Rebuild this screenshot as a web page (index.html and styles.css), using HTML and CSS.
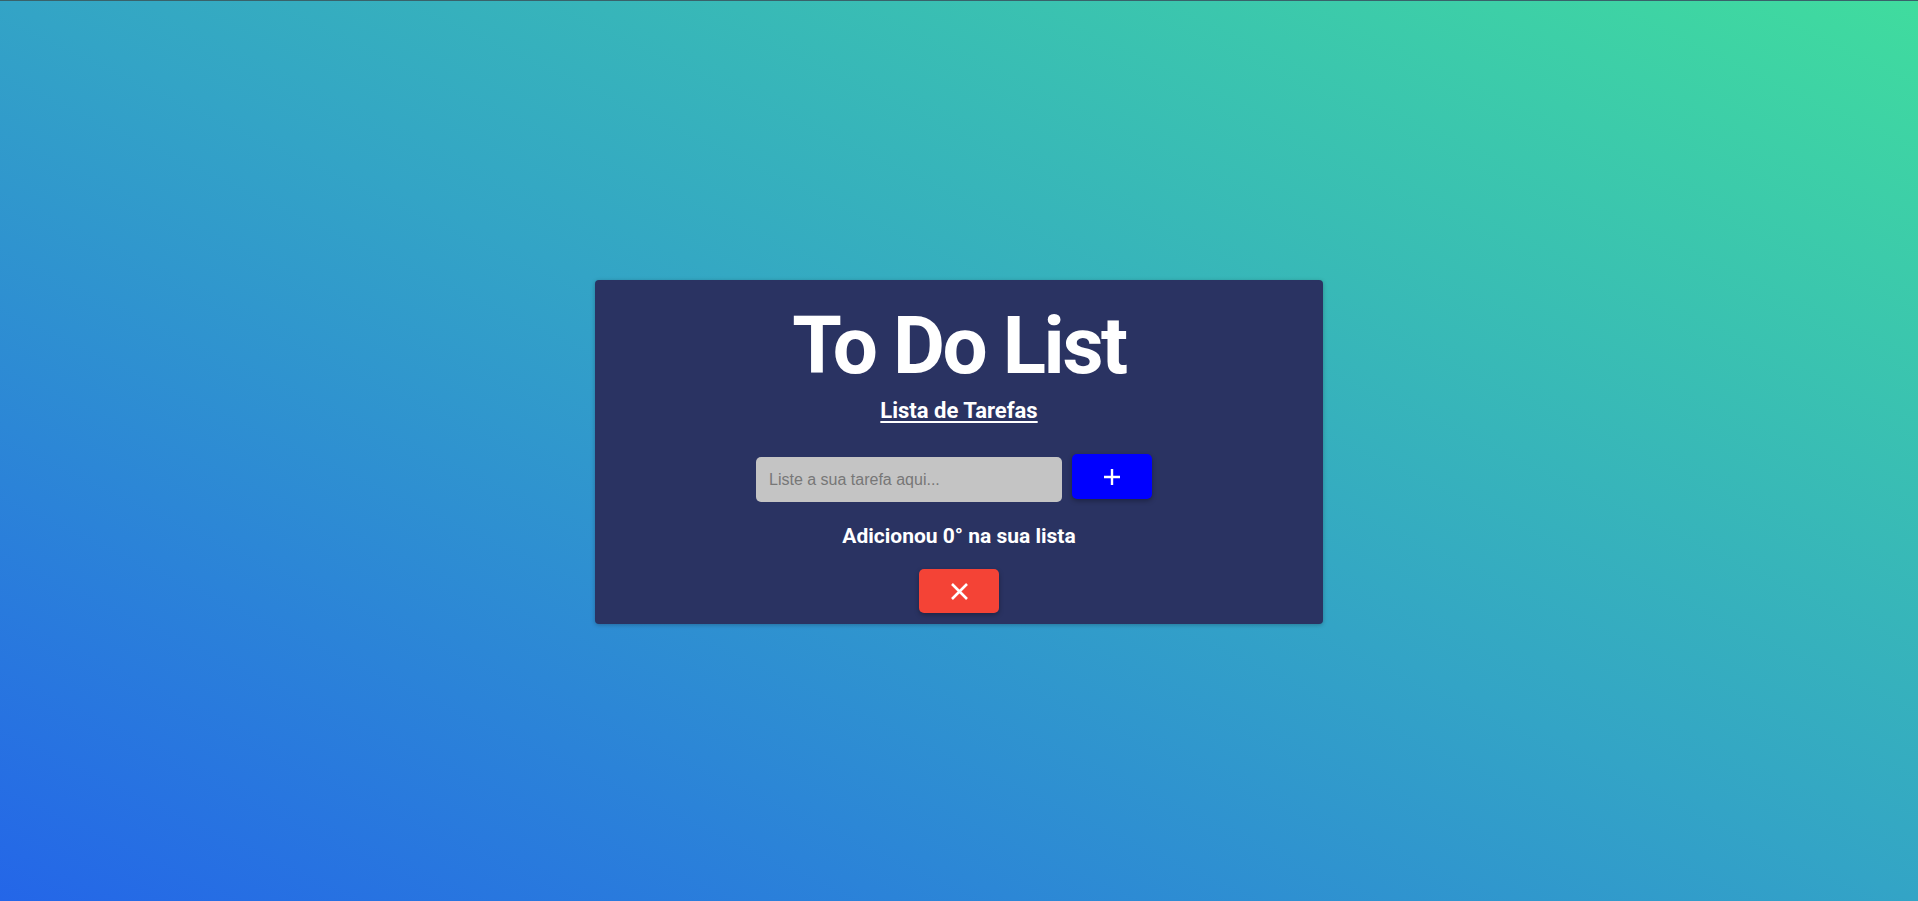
FILE: index.html
```html
<!DOCTYPE html>
<html lang="pt">
<head>
<meta charset="utf-8">
<title>To Do List</title>
<link rel="stylesheet" href="styles.css">
</head>
<body>
<main class="page">
  <section class="card">
    <h1 class="title">To Do List</h1>
    <h2 class="subtitle">Lista de Tarefas</h2>
    <div class="entry">
      <input class="task-input" type="text" placeholder="Liste a sua tarefa aqui...">
      <button class="btn btn-add" type="button" aria-label="Adicionar">
        <svg width="18" height="18" viewBox="0 0 18 18"><path d="M9 1V17M1 9H17" stroke="#fff" stroke-width="2.4" fill="none"/></svg>
      </button>
    </div>
    <p class="counter">Adicionou 0° na sua lista</p>
    <button class="btn btn-clear" type="button" aria-label="Limpar">
      <svg width="19" height="19" viewBox="0 0 19 19"><path d="M2 2L17 17M17 2L2 17" stroke="#fff" stroke-width="2.6" fill="none"/></svg>
    </button>
  </section>
</main>
</body>
</html>
```
FILE: styles.css
```css
* { box-sizing: border-box; }
html, body { margin: 0; padding: 0; height: 100%; }
body {
  font-family: Roboto, "Liberation Sans", Arial, sans-serif;
  background: linear-gradient(to top right, #2466e8 0%, #33a4c6 50%, #40dc9e 100%);
  border-top: 1px solid #39626a;
}
.page {
  min-height: 100%;
  display: flex;
  align-items: center;
  justify-content: center;
  padding-top: 2px;
}
.card {
  width: 728px;
  background: #2a3362;
  border-radius: 4px;
  box-shadow: 0 1px 4px rgba(0, 0, 0, 0.25);
  display: flex;
  flex-direction: column;
  align-items: center;
  padding: 19px 0 11px;
  color: #fff;
}
.title {
  margin: 0;
  font-size: 80px;
  font-weight: 700;
  line-height: 94px;
  letter-spacing: -2.4px;
}
.subtitle {
  margin: 5px 0 0;
  font-size: 22px;
  font-weight: 700;
  line-height: 26px;
  text-decoration: underline;
  text-underline-offset: 3px;
  text-decoration-thickness: 2px;
}
.entry {
  margin: 30px 10px 0 0;
  display: flex;
  align-items: flex-start;
  gap: 10px;
}
.task-input {
  margin-top: 3px;
  width: 306px;
  height: 45px;
  border: none;
  border-radius: 5px;
  background: #c4c4c4;
  padding: 0 13px;
  font-family: Arial, "Liberation Sans", sans-serif;
  font-size: 16px;
  color: #333;
  outline: none;
}
.task-input::placeholder { color: #777; }
.btn {
  width: 80px;
  height: 45px;
  border: none;
  border-radius: 5px;
  display: flex;
  align-items: center;
  justify-content: center;
  padding: 0;
  cursor: pointer;
  box-shadow: 0 2px 5px rgba(0, 0, 0, 0.3);
}
.btn-add { background: #0000ff; }
.btn-clear { background: #f44336; height: 44px; }
.counter {
  margin: 21px 0 20px;
  font-size: 21px;
  font-weight: 700;
  line-height: 26px;
}
```
